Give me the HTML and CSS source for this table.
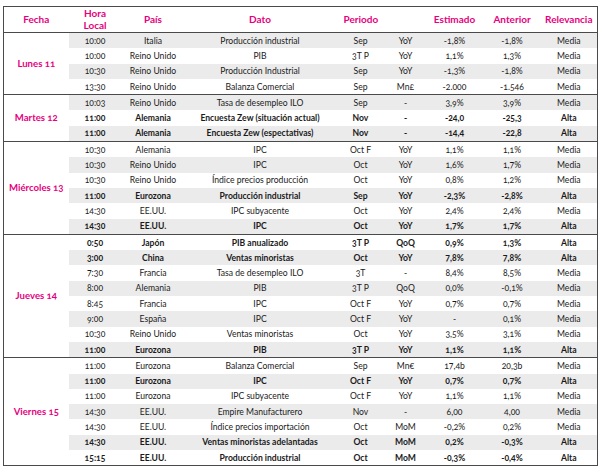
FILE: index.html
```html
<!DOCTYPE html>
<html lang="es">
<head>
<meta charset="utf-8">
<link rel="stylesheet" href="styles.css">
</head>
<body>
<table class="cal">
<colgroup>
<col class="c-fecha"><col class="c-hora"><col class="c-pais"><col class="c-dato"><col class="c-per"><col class="c-unit"><col class="c-est"><col class="c-ant"><col class="c-rel">
</colgroup>
<thead>
<tr><th>Fecha</th><th>Hora<br>Local</th><th>País</th><th>Dato</th><th colspan="2" class="per">Periodo</th><th>Estimado</th><th>Anterior</th><th>Relevancia</th></tr>
</thead>
<tbody>
<tr class="g"><td class="day" rowspan="4">Lunes 11</td><td>10:00</td><td>Italia</td><td>Producción industrial</td><td>Sep</td><td>YoY</td><td>-1,8%</td><td>-1,8%</td><td>Media</td></tr>
<tr><td>10:00</td><td>Reino Unido</td><td>PIB</td><td>3T P</td><td>YoY</td><td>1,1%</td><td>1,3%</td><td>Media</td></tr>
<tr class="g"><td>10:30</td><td>Reino Unido</td><td>Producción Industrial</td><td>Sep</td><td>YoY</td><td>-1,3%</td><td>-1,8%</td><td>Media</td></tr>
<tr><td>13:30</td><td>Reino Unido</td><td>Balanza Comercial</td><td>Sep</td><td>Mn£</td><td>-2.000</td><td>-1.546</td><td>Media</td></tr>
</tbody>
<tbody>
<tr class="g"><td class="day" rowspan="3">Martes 12</td><td>10:03</td><td>Reino Unido</td><td>Tasa de desempleo ILO</td><td>Sep</td><td>-</td><td>3,9%</td><td>3,9%</td><td>Media</td></tr>
<tr class="b"><td>11:00</td><td>Alemania</td><td>Encuesta Zew (situación actual)</td><td>Nov</td><td>-</td><td>-24,0</td><td>-25,3</td><td>Alta</td></tr>
<tr class="g b"><td>11:00</td><td>Alemania</td><td>Encuesta Zew (espectativas)</td><td>Nov</td><td>-</td><td>-14,4</td><td>-22,8</td><td>Alta</td></tr>
</tbody>
<tbody>
<tr><td class="day" rowspan="6">Miércoles 13</td><td>10:30</td><td>Alemania</td><td>IPC</td><td>Oct F</td><td>YoY</td><td>1,1%</td><td>1,1%</td><td>Media</td></tr>
<tr class="g"><td>10:30</td><td>Reino Unido</td><td>IPC</td><td>Oct</td><td>YoY</td><td>1,6%</td><td>1,7%</td><td>Media</td></tr>
<tr><td>10:30</td><td>Reino Unido</td><td>Índice precios producción</td><td>Oct</td><td>YoY</td><td>0,8%</td><td>1,2%</td><td>Media</td></tr>
<tr class="g b"><td>11:00</td><td>Eurozona</td><td>Producción industrial</td><td>Sep</td><td>YoY</td><td>-2,3%</td><td>-2,8%</td><td>Alta</td></tr>
<tr><td>14:30</td><td>EE.UU.</td><td>IPC subyacente</td><td>Oct</td><td>YoY</td><td>2,4%</td><td>2,4%</td><td>Media</td></tr>
<tr class="g b"><td>14:30</td><td>EE.UU.</td><td>IPC</td><td>Oct</td><td>YoY</td><td>1,7%</td><td>1,7%</td><td>Alta</td></tr>
</tbody>
<tbody>
<tr class="b"><td class="day" rowspan="8">Jueves 14</td><td>0:50</td><td>Japón</td><td>PIB anualizado</td><td>3T P</td><td>QoQ</td><td>0,9%</td><td>1,3%</td><td>Alta</td></tr>
<tr class="g b"><td>3:00</td><td>China</td><td>Ventas minoristas</td><td>Oct</td><td>YoY</td><td>7,8%</td><td>7,8%</td><td>Alta</td></tr>
<tr><td>7:30</td><td>Francia</td><td>Tasa de desempleo ILO</td><td>3T</td><td>-</td><td>8,4%</td><td>8,5%</td><td>Media</td></tr>
<tr class="g"><td>8:00</td><td>Alemania</td><td>PIB</td><td>3T P</td><td>QoQ</td><td>0,0%</td><td>-0,1%</td><td>Media</td></tr>
<tr><td>8:45</td><td>Francia</td><td>IPC</td><td>Oct F</td><td>YoY</td><td>0,7%</td><td>0,7%</td><td>Media</td></tr>
<tr class="g"><td>9:00</td><td>España</td><td>IPC</td><td>Oct F</td><td>YoY</td><td>-</td><td>0,1%</td><td>Media</td></tr>
<tr><td>10:30</td><td>Reino Unido</td><td>Ventas minoristas</td><td>Oct</td><td>YoY</td><td>3,5%</td><td>3,1%</td><td>Media</td></tr>
<tr class="g b"><td>11:00</td><td>Eurozona</td><td>PIB</td><td>3T P</td><td>YoY</td><td>1,1%</td><td>1,1%</td><td>Alta</td></tr>
</tbody>
<tbody>
<tr><td class="day" rowspan="7">Viernes 15</td><td>11:00</td><td>Eurozona</td><td>Balanza Comercial</td><td>Sep</td><td>Mn€</td><td>17,4b</td><td>20,3b</td><td>Media</td></tr>
<tr class="g b"><td>11:00</td><td>Eurozona</td><td>IPC</td><td>Oct F</td><td>YoY</td><td>0,7%</td><td>0,7%</td><td>Alta</td></tr>
<tr><td>11:00</td><td>Eurozona</td><td>IPC subyacente</td><td>Oct F</td><td>YoY</td><td>1,1%</td><td>1,1%</td><td>Media</td></tr>
<tr class="g"><td>14:30</td><td>EE.UU.</td><td>Empire Manufacturero</td><td>Nov</td><td>-</td><td>6,00</td><td>4,00</td><td>Media</td></tr>
<tr><td>14:30</td><td>EE.UU.</td><td>Índice precios importación</td><td>Oct</td><td>MoM</td><td>-0,2%</td><td>0,2%</td><td>Media</td></tr>
<tr class="g b"><td>14:30</td><td>EE.UU.</td><td>Ventas minoristas adelantadas</td><td>Oct</td><td>MoM</td><td>0,2%</td><td>-0,3%</td><td>Alta</td></tr>
<tr class="b"><td>15:15</td><td>EE.UU.</td><td>Producción industrial</td><td>Oct</td><td>MoM</td><td>-0,3%</td><td>-0,4%</td><td>Alta</td></tr>
</tbody>
</table>
</body>
</html>
```
FILE: styles.css
```css
html, body {
  margin: 0;
  padding: 0;
  background: #fff;
}
body {
  padding: 6px 0 0 3px;
  font-family: Lato, "Open Sans", sans-serif;
  font-variant-numeric: oldstyle-nums;
  color: #1a1a1a;
}
.cal {
  width: 594px;
  table-layout: fixed;
  border-collapse: collapse;
  border: 1px solid #4a4a4a;
}
.c-fecha { width: 65px; }
.c-hora { width: 53px; }
.c-pais { width: 63px; }
.c-dato { width: 151px; }
.c-per { width: 50px; }
.c-unit { width: 40px; }
.c-est { width: 58px; }
.c-ant { width: 57px; }
.c-rel { width: 57px; }
.cal th {
  height: 25px;
  padding: 0;
  font-size: 10px;
  line-height: 11.5px;
  font-weight: bold;
  color: #e6007e;
  text-align: center;
  vertical-align: middle;
  border-bottom: 1px solid #4a4a4a;
}
.cal th.per {
  text-align: left;
  padding-left: 8px;
}
.cal tbody {
  border-top: 1px solid #4a4a4a;
}
.cal td {
  height: 15.3px;
  padding: 0;
  font-size: 8.6px;
  line-height: 10px;
  text-align: center;
  vertical-align: middle;
  white-space: nowrap;
}
.cal tr.g td {
  background: #ebebeb;
}
.cal tr.b td {
  font-weight: bold;
}
.cal td.day,
.cal tr.g td.day,
.cal tr.b td.day {
  background: #fff;
  color: #e6007e;
  font-weight: bold;
  font-size: 9.6px;
}
```
